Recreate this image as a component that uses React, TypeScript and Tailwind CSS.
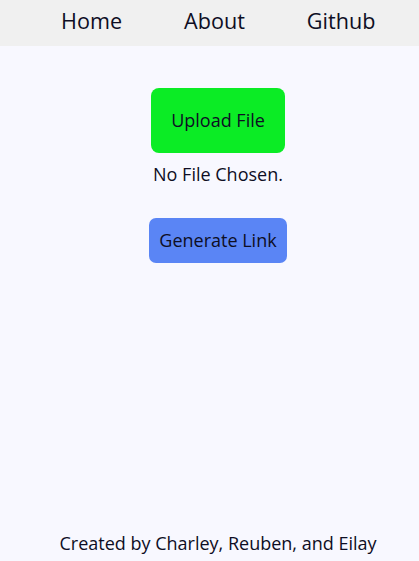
export default function App() {
  return (
    <div className="min-h-screen flex flex-col bg-[#f8f8ff] text-[#0e0e24]" style={{ fontFamily: '"Open Sans", sans-serif' }}>
      <nav className="h-[46px] bg-[#f0f0f0] flex items-center pl-[61px] pb-[4px] gap-[62px] text-[21.6px]">
        <span>Home</span>
        <span>About</span>
        <span>Github</span>
      </nav>
      <main className="flex-1 flex flex-col items-center pl-[17px] pt-[42px]">
        <button className="w-[134px] h-[65px] rounded-[8px] bg-[#0bec25] text-[18px]">Upload File</button>
        <p className="mt-[8px] text-[18px]">No File Chosen.</p>
        <button className="mt-[30px] w-[138px] h-[45px] rounded-[7px] bg-[#5a85f5] text-[18px]">Generate Link</button>
      </main>
      <footer className="pl-[17px] pb-[4px] text-center text-[18px]">Created by Charley, Reuben, and Eilay</footer>
    </div>
  );
}
